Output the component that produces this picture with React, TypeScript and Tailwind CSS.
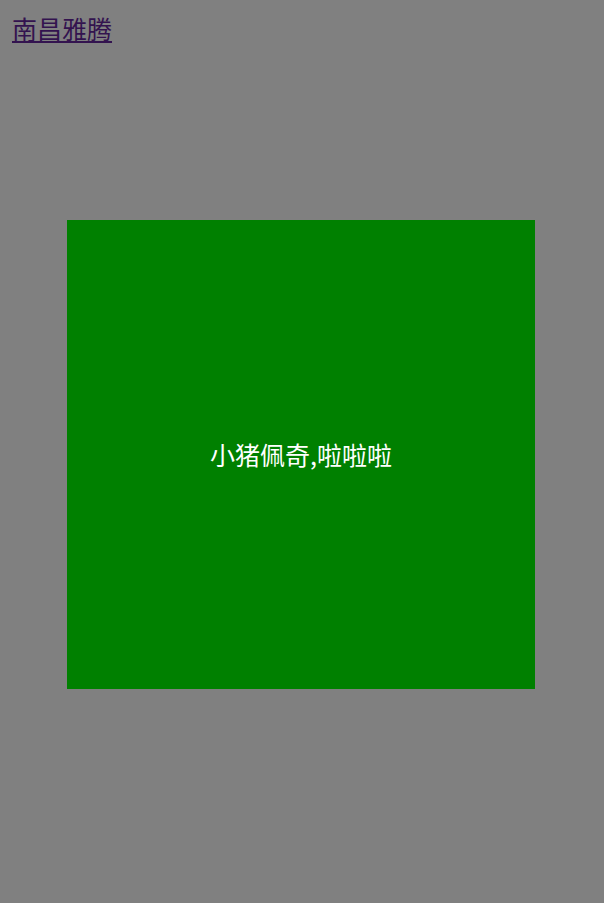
const App = () => {
  return (
    <div
      className="min-h-[903px] bg-[#808080] flex flex-col"
      style={{ fontFamily: '"Noto Sans CJK SC", "Noto Sans", sans-serif' }}
    >
      <div className="pl-3 pt-[9px]">
        <a href="#" className="text-[25px] leading-[38px] text-[#33134f] underline">
          南昌雅腾
        </a>
      </div>
      <div className="flex pl-[67px] pt-[173px]">
        <div className="w-[468px] h-[469px] bg-[#008000] flex items-center justify-center">
          <p className="text-white text-[25px] leading-none">小猪佩奇,啦啦啦</p>
        </div>
      </div>
    </div>
  );
};

export default App;
